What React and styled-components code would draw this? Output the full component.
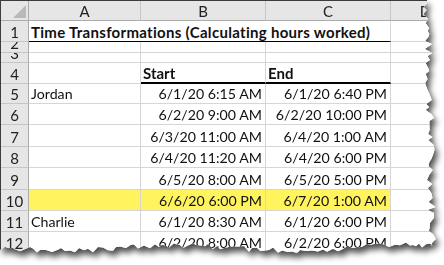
import React from "react";
import styled, { createGlobalStyle } from "styled-components";

const Global = createGlobalStyle`
  html, body { margin: 0; padding: 0; background: #ffffff; overflow: hidden; }
  body { width: 444px; height: 265px; }
`;

const COLS = "28px 112px 125px 125px 70px";

const Shadow = styled.div`
  width: 444px;
  height: 265px;
  overflow: hidden;
  filter: drop-shadow(3px 5px 3px rgba(0, 0, 0, 0.7));
`;

const Sheet = styled.div`
  display: grid;
  grid-template-columns: ${COLS};
  grid-template-rows: 20px 21px 11px 10px 21px 20px 21px 22px 21px 22px 21px 21px 21px;
  width: 461px;
  background: #ffffff;
  border-top: 1px solid #3c3c3c;
  border-left: 1px solid #3c3c3c;
  font-family: Lato, "Noto Sans", sans-serif;
  font-size: 15px;
  color: #111111;
`;

const Corner = styled.div`
  position: relative;
  background: #e6e6e6;
  border-right: 1px solid #ababab;
  border-bottom: 1px solid #ababab;
`;

const Tri = styled.svg`
  position: absolute;
  left: 12px;
  top: 4px;
`;

const ColHead = styled.div`
  display: flex;
  align-items: flex-end;
  justify-content: center;
  background: #e6e6e6;
  border-right: 1px solid #c6c6c6;
  border-bottom: 1px solid #ababab;
  color: #222;
  line-height: 18px;
  overflow: hidden;
`;

const RowHead = styled.div`
  display: flex;
  align-items: flex-end;
  justify-content: center;
  background: #e6e6e6;
  border-right: 1px solid #ababab;
  border-bottom: 1px solid #c6c6c6;
  color: #222;
  line-height: 18px;
  overflow: hidden;
`;

const Cell = styled.div`
  display: flex;
  align-items: flex-end;
  justify-content: ${(p) => (p.$right ? "flex-end" : "flex-start")};
  grid-column: ${(p) => (p.$span ? `span ${p.$span}` : "auto")};
  padding: 0 ${(p) => (p.$right ? "3px" : "0")} 0 ${(p) => (p.$right ? "0" : "2px")};
  background: ${(p) => (p.$hl ? "#fff35e" : "#ffffff")};
  border-right: 1px solid #d6d6d6;
  border-bottom: ${(p) =>
    p.$thick ? "2px solid #000" : p.$line ? "1px solid #000" : "1px solid #d6d6d6"};
  font-weight: ${(p) => (p.$bold ? 700 : 400)};
  font-size: ${(p) => (p.$bold ? "15px" : "14.2px")};
  letter-spacing: ${(p) => (p.$span ? "0.3px" : "0")};
  line-height: 18px;
  white-space: nowrap;
  overflow: ${(p) => (p.$span ? "visible" : "hidden")};
`;

const rows = [
  { n: 5, a: "Jordan", b: "6/1/20 6:15 AM", c: "6/1/20 6:40 PM" },
  { n: 6, a: "", b: "6/2/20 9:00 AM", c: "6/2/20 10:00 PM" },
  { n: 7, a: "", b: "6/3/20 11:00 AM", c: "6/4/20 1:00 AM" },
  { n: 8, a: "", b: "6/4/20 11:20 AM", c: "6/4/20 6:00 PM" },
  { n: 9, a: "", b: "6/5/20 8:00 AM", c: "6/5/20 5:00 PM" },
  { n: 10, a: "", b: "6/6/20 6:00 PM", c: "6/7/20 1:00 AM", hl: true },
  { n: 11, a: "Charlie", b: "6/1/20 8:30 AM", c: "6/1/20 6:00 PM" },
  { n: 12, a: "", b: "6/2/20 8:00 AM", c: "6/2/20 6:00 PM" },
  { n: 13, a: "", b: "", c: "" },
];

function tornPath() {
  let seed = 7;
  const rnd = () => {
    seed = (seed * 9301 + 49297) % 233280;
    return seed / 233280;
  };
  const pts = ["0px 0px", "427px 0px"];
  for (let y = 3; y < 246; y += 3 + Math.floor(rnd() * 3)) {
    const base = 427 + (y / 246) * 6;
    const x = base + (rnd() - 0.5) * 9;
    pts.push(`${x.toFixed(1)}px ${y}px`);
  }
  pts.push("433px 246px");
  for (let x = 430; x > 0; x -= 3 + Math.floor(rnd() * 4)) {
    const y = 248 + Math.sin(x / 37) * 2.5 + (rnd() - 0.5) * 6;
    pts.push(`${x}px ${y.toFixed(1)}px`);
  }
  pts.push("0px 250px");
  return `polygon(${pts.join(", ")})`;
}

const clip = tornPath();

export default function App() {
  return (
    <>
      <Global />
      <Shadow>
        <Sheet style={{ clipPath: clip }}>
          <Corner>
            <Tri width="13" height="13" viewBox="0 0 13 13">
              <polygon points="13,0 13,13 0,13" fill="#b9b9b9" />
            </Tri>
          </Corner>
          <ColHead>A</ColHead>
          <ColHead>B</ColHead>
          <ColHead>C</ColHead>
          <ColHead>D</ColHead>

          <RowHead>1</RowHead>
          <Cell $span={3} $bold $line>
            Time Transformations (Calculating hours worked)
          </Cell>
          <Cell />

          <RowHead>2</RowHead>
          <Cell />
          <Cell />
          <Cell />
          <Cell />

          <RowHead>3</RowHead>
          <Cell />
          <Cell />
          <Cell />
          <Cell />

          <RowHead>4</RowHead>
          <Cell />
          <Cell $bold $thick>Start</Cell>
          <Cell $bold $thick>End</Cell>
          <Cell />

          {rows.map((r) => (
            <React.Fragment key={r.n}>
              <RowHead>{r.n}</RowHead>
              <Cell $hl={r.hl}>{r.a}</Cell>
              <Cell $hl={r.hl} $right>{r.b}</Cell>
              <Cell $hl={r.hl} $right>{r.c}</Cell>
              <Cell />
            </React.Fragment>
          ))}
        </Sheet>
      </Shadow>
    </>
  );
}
